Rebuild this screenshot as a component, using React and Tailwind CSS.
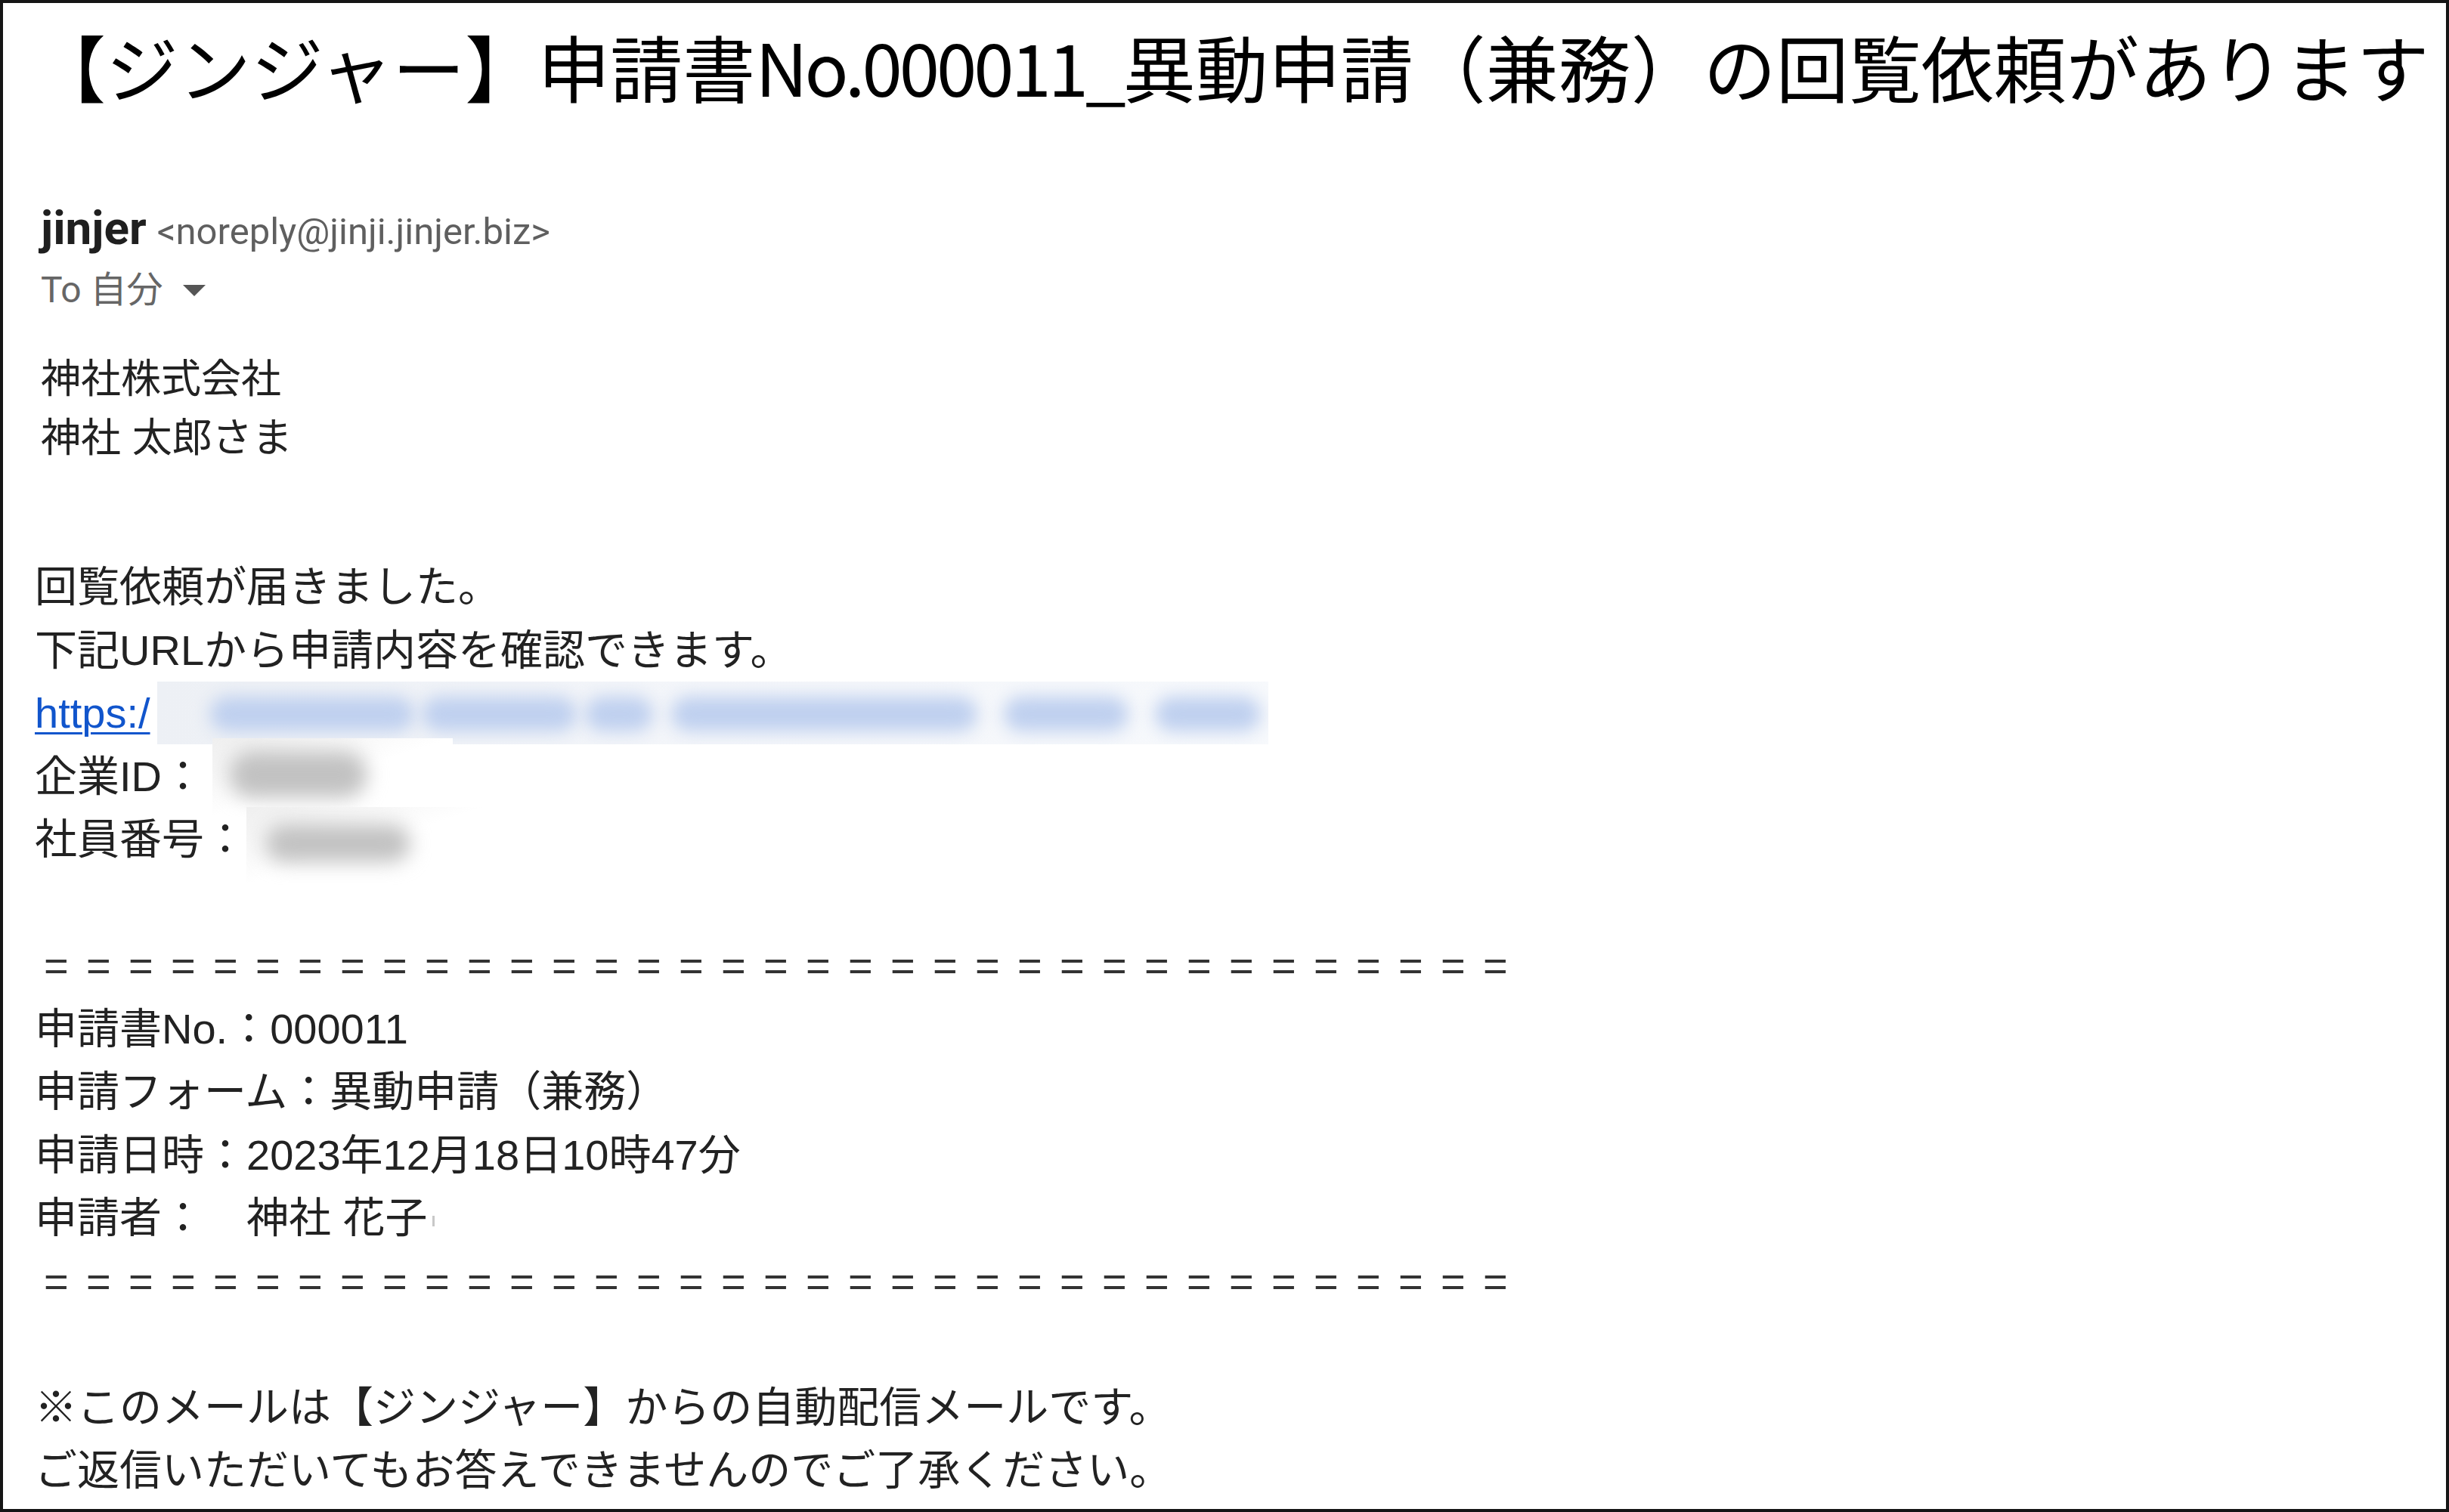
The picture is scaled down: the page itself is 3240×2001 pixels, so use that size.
const jp = "font-['Liberation_Sans','Noto_Sans_CJK_JP',sans-serif]";

// blurred redaction over the URL
const urlBlobs = [
  [70, 270],
  [350, 205],
  [566, 90],
  [680, 405],
  [1120, 165],
  [1320, 140],
];

function UrlRedaction() {
  return (
    <span className="relative inline-block align-top ml-[9px] w-[1470px] h-[83px] bg-linear-to-r from-[#edf0f5] via-[#f4f6fa] to-[#f7f9fc] overflow-hidden">
      {urlBlobs.map(([left, width], i) => (
        <span
          key={i}
          className="absolute top-[20px] h-[46px] rounded-full bg-[#bfd0ef] blur-[11px]"
          style={{ left, width }}
        />
      ))}
    </span>
  );
}

function GrayRedaction({ className, blob }) {
  return (
    <span className={"relative inline-block align-top bg-linear-to-br from-[#efefef] via-white to-white overflow-hidden " + className}>
      <span className={"absolute rounded-full bg-[#c2c2c2] blur-[13px] " + blob} />
    </span>
  );
}

export default function App() {
  const rule = "=".repeat(35);

  return (
    <div className="w-[3240px] h-[2001px] bg-white border-4 border-[#151515] overflow-hidden">
      {/* subject */}
      <h1 className="pl-[40px] pt-[26px] text-[96px] leading-[113px] font-normal text-black whitespace-nowrap font-['Noto_Sans_CJK_JP',sans-serif]">
        【ジンジャー】申請書<span className="tracking-[-4px]">No.000011_</span>異動申請（兼務）の回覧依頼があります
      </h1>

      {/* sender */}
      <div className="pl-[50px] pt-[124px]">
        <div className="text-[62px] leading-[70px] whitespace-nowrap font-['Roboto','Noto_Sans_CJK_JP',sans-serif]">
          <span className="font-bold text-[#1f1f1f]">jinjer</span>
          <span className="ml-[14px] text-[49px] text-[#5f5f5f]">&lt;noreply@jinji.jinjer.biz&gt;</span>
        </div>
        <div className="mt-[12px] flex items-center h-[60px] text-[48px] leading-[60px] text-[#666] font-['Roboto','Noto_Sans_CJK_JP',sans-serif]">
          <span>To 自分</span>
          <svg className="ml-[26px]" width="30" height="15" viewBox="0 0 30 15">
            <polygon points="0,0 30,0 15,15" fill="#555" />
          </svg>
        </div>

        <div className={"mt-[49px] text-[53px] leading-[78px] text-[#222] " + jp}>
          <div>神社株式会社</div>
          <div>神社 太郎さま</div>
        </div>
      </div>

      {/* body */}
      <div className={"pl-[42px] mt-[116px] text-[56px] leading-[83.5px] text-[#222] whitespace-nowrap " + jp}>
        <div>回覧依頼が届きました。</div>
        <div>下記URLから申請内容を確認できます。</div>
        <div>
          <span className="text-[#1155cc] underline underline-offset-[6px] decoration-[3px]">https:/</span>
          <UrlRedaction />
        </div>
        <div>
          企業ID：
          <GrayRedaction
            className="ml-[11px] w-[318px] h-[104px] -mt-[9px] -mb-[12px]"
            blob="left-[22px] top-[17px] w-[183px] h-[62px]"
          />
        </div>
        <div>
          社員番号：
          <GrayRedaction
            className="w-[316px] h-[103px] -mt-[1px] -mb-[19px]"
            blob="left-[25px] top-[23px] w-[192px] h-[50px]"
          />
        </div>
        <div className="h-[83.5px]" />
        <div className="ml-[12px] tracking-[23.3px] text-[#333] font-['Liberation_Sans',sans-serif]">{rule}</div>
        <div>申請書No.：000011</div>
        <div>申請フォーム：異動申請（兼務）</div>
        <div>申請日時：2023年12月18日10時47分</div>
        <div>
          申請者：　神社 花子
          <span className="inline-block align-middle ml-[6px] w-[3px] h-[14px] bg-[#c8c8c8]" />
        </div>
        <div className="ml-[12px] tracking-[23.3px] text-[#333] font-['Liberation_Sans',sans-serif]">{rule}</div>
        <div className="h-[83.5px]" />
        <div>※このメールは【ジンジャー】からの自動配信メールです。</div>
        <div>ご返信いただいてもお答えできませんのでご了承ください。</div>
      </div>
    </div>
  );
}
